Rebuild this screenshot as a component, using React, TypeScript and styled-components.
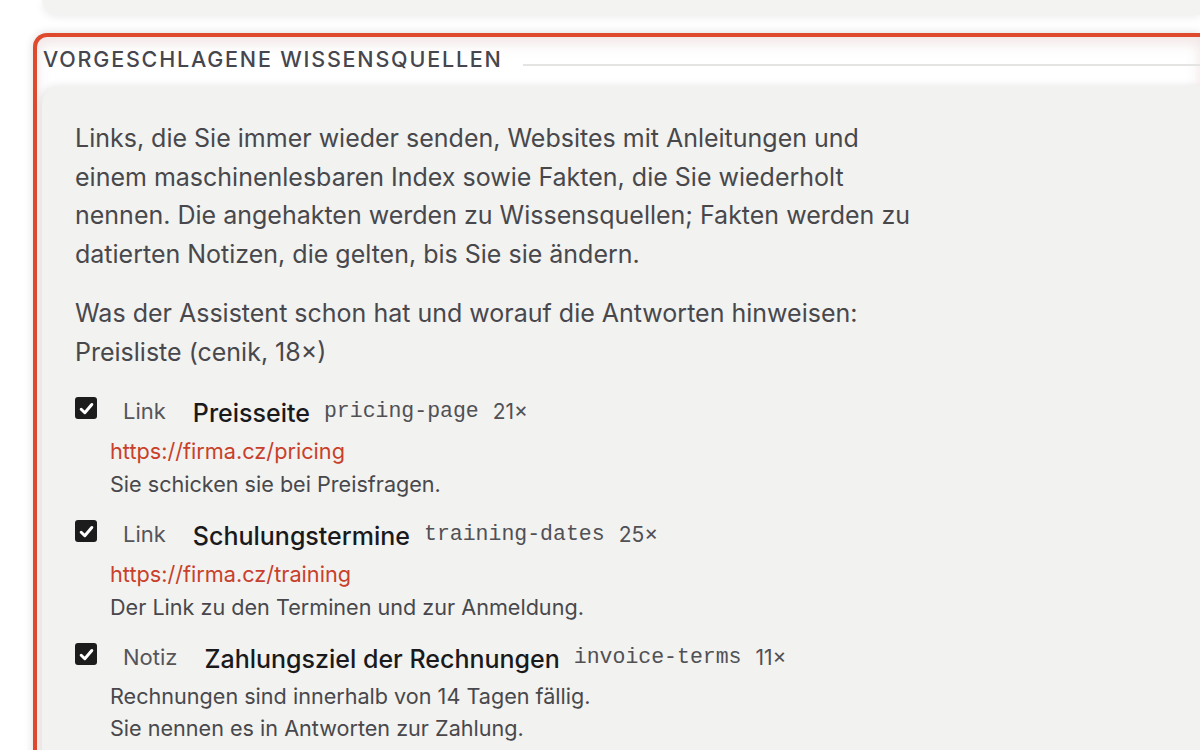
import React from "react";
import styled, { createGlobalStyle } from "styled-components";

const GlobalStyle = createGlobalStyle`
  html, body {
    margin: 0;
    padding: 0;
    background: #ffffff;
    font-family: Inter, "Noto Sans", sans-serif;
    overflow: hidden;
  }
`;

type Source = {
  kind: string;
  title: string;
  slug: string;
  count: number;
  url?: string;
  notes: string[];
};

const sources: Source[] = [
  {
    kind: "Link",
    title: "Preisseite",
    slug: "pricing-page",
    count: 21,
    url: "https://firma.cz/pricing",
    notes: ["Sie schicken sie bei Preisfragen."],
  },
  {
    kind: "Link",
    title: "Schulungstermine",
    slug: "training-dates",
    count: 25,
    url: "https://firma.cz/training",
    notes: ["Der Link zu den Terminen und zur Anmeldung."],
  },
  {
    kind: "Notiz",
    title: "Zahlungsziel der Rechnungen",
    slug: "invoice-terms",
    count: 11,
    notes: [
      "Rechnungen sind innerhalb von 14 Tagen fällig.",
      "Sie nennen es in Antworten zur Zahlung.",
    ],
  },
];

const App: React.FC = () => {
  return <>
    <GlobalStyle />
    <Page>
      <PrevCard />
      <Section>
        <SectionHead>
          <h2>Vorgeschlagene Wissensquellen</h2>
          <Rule />
        </SectionHead>
        <Panel>
          <Intro>
            Links, die Sie immer wieder senden, Websites mit Anleitungen und
            einem maschinenlesbaren Index sowie Fakten, die Sie wiederholt
            nennen. Die angehakten werden zu Wissensquellen; Fakten werden zu
            datierten Notizen, die gelten, bis Sie sie ändern.
          </Intro>
          <Intro>
            Was der Assistent schon hat und worauf die Antworten hinweisen:
            <br />
            Preisliste (cenik, 18×)
          </Intro>
          <List>
            {sources.map((s) => (
              <Item key={s.slug}>
                <ItemHead>
                  <Check aria-checked="true">
                    <svg viewBox="0 0 16 16" width="17" height="17">
                      <path d="M3 8.7 6.4 12 13 4.2" fill="none" stroke="#fff" strokeWidth="2.8" strokeLinecap="round" strokeLinejoin="round" />
                    </svg>
                  </Check>
                  <Kind>{s.kind}</Kind>
                  <Title>{s.title}</Title>
                  <Slug>{s.slug}</Slug>
                  <Count>{s.count}×</Count>
                </ItemHead>
                <ItemBody>
                  {s.url && <Url href={s.url}>{s.url}</Url>}
                  {s.notes.map((n) => (
                    <Note key={n}>{n}</Note>
                  ))}
                </ItemBody>
              </Item>
            ))}
          </List>
        </Panel>
      </Section>
    </Page>
  </>
}

const Page = styled.main`
  width: 1200px;
  height: 750px;
  overflow: hidden;
`;

const PrevCard = styled.div`
  margin-left: 42px;
  height: 15px;
  background: #f3f3f1;
  border-bottom-left-radius: 18px;
  box-shadow: 0 2px 8px rgba(0, 0, 0, 0.08);
`;

const Section = styled.section`
  margin: 18px 0 0 33px;
  border: 4px solid #e04a2c;
  border-right: none;
  border-radius: 14px 0 0 0;
  background: #ffffff;
  box-shadow: 0 0 10px rgba(0, 0, 0, 0.14), inset 0 6px 14px rgba(190, 130, 130, 0.22);
  padding: 0 0 0 5px;
  height: 800px;
`;

const SectionHead = styled.div`
  display: flex;
  align-items: center;
  gap: 20px;
  padding: 0 0 0 1px;
  height: 44px;
  box-sizing: border-box;

  h2 {
    margin: 0;
    font-family: Inter, "Noto Sans", sans-serif;
    font-size: 21.5px;
    font-weight: 500;
    letter-spacing: 1.8px;
    text-transform: uppercase;
    color: #46464e;
    white-space: nowrap;
  }
`;

const Rule = styled.div`
  flex: 1;
  height: 2px;
  margin-top: 12px;
  background: #e4e4e2;
`;

const Panel = styled.div`
  margin-top: 5px;
  background: #f2f2f0;
  border-top-left-radius: 18px;
  box-shadow: -2px 0 8px rgba(0, 0, 0, 0.1);
  padding: 33px 0 0 33px;
  height: 700px;
`;

const Intro = styled.p`
  margin: 0 0 21px;
  max-width: 845px;
  font-size: 25px;
  line-height: 38.5px;
  color: #48484c;
`;

const List = styled.div`
  display: flex;
  flex-direction: column;
  gap: 19px;
  margin-top: 25px;
`;

const Item = styled.div`
  display: flex;
  flex-direction: column;
`;

const ItemHead = styled.div`
  display: flex;
  align-items: center;
  gap: 14px;
  height: 30px;
`;

const Check = styled.span`
  display: inline-flex;
  align-items: center;
  justify-content: center;
  width: 22px;
  height: 22px;
  border-radius: 3px;
  background: #1c1c1c;
  margin-bottom: 6px;
  flex: none;
`;

const Kind = styled.span`
  padding: 0 13px 0 12px;
  font-size: 22px;
  color: #55555a;
`;

const Title = styled.span`
  font-size: 25px;
  font-weight: 500;
  color: #1a1a1c;
  margin-top: 4px;
`;

const Slug = styled.code`
  font-family: "Liberation Mono", "DejaVu Sans Mono", monospace;
  font-size: 21.5px;
  color: #505055;
`;

const Count = styled.span`
  font-size: 21px;
  color: #505055;
`;

const ItemBody = styled.div`
  display: flex;
  flex-direction: column;
  padding-left: 35px;
  margin-top: 8px;
`;

const Url = styled.a`
  font-size: 21.7px;
  line-height: 34px;
  color: #c8402a;
  text-decoration: none;
`;

const Note = styled.div`
  font-size: 21.6px;
  line-height: 32px;
  color: #48484c;
`;

export default App;
